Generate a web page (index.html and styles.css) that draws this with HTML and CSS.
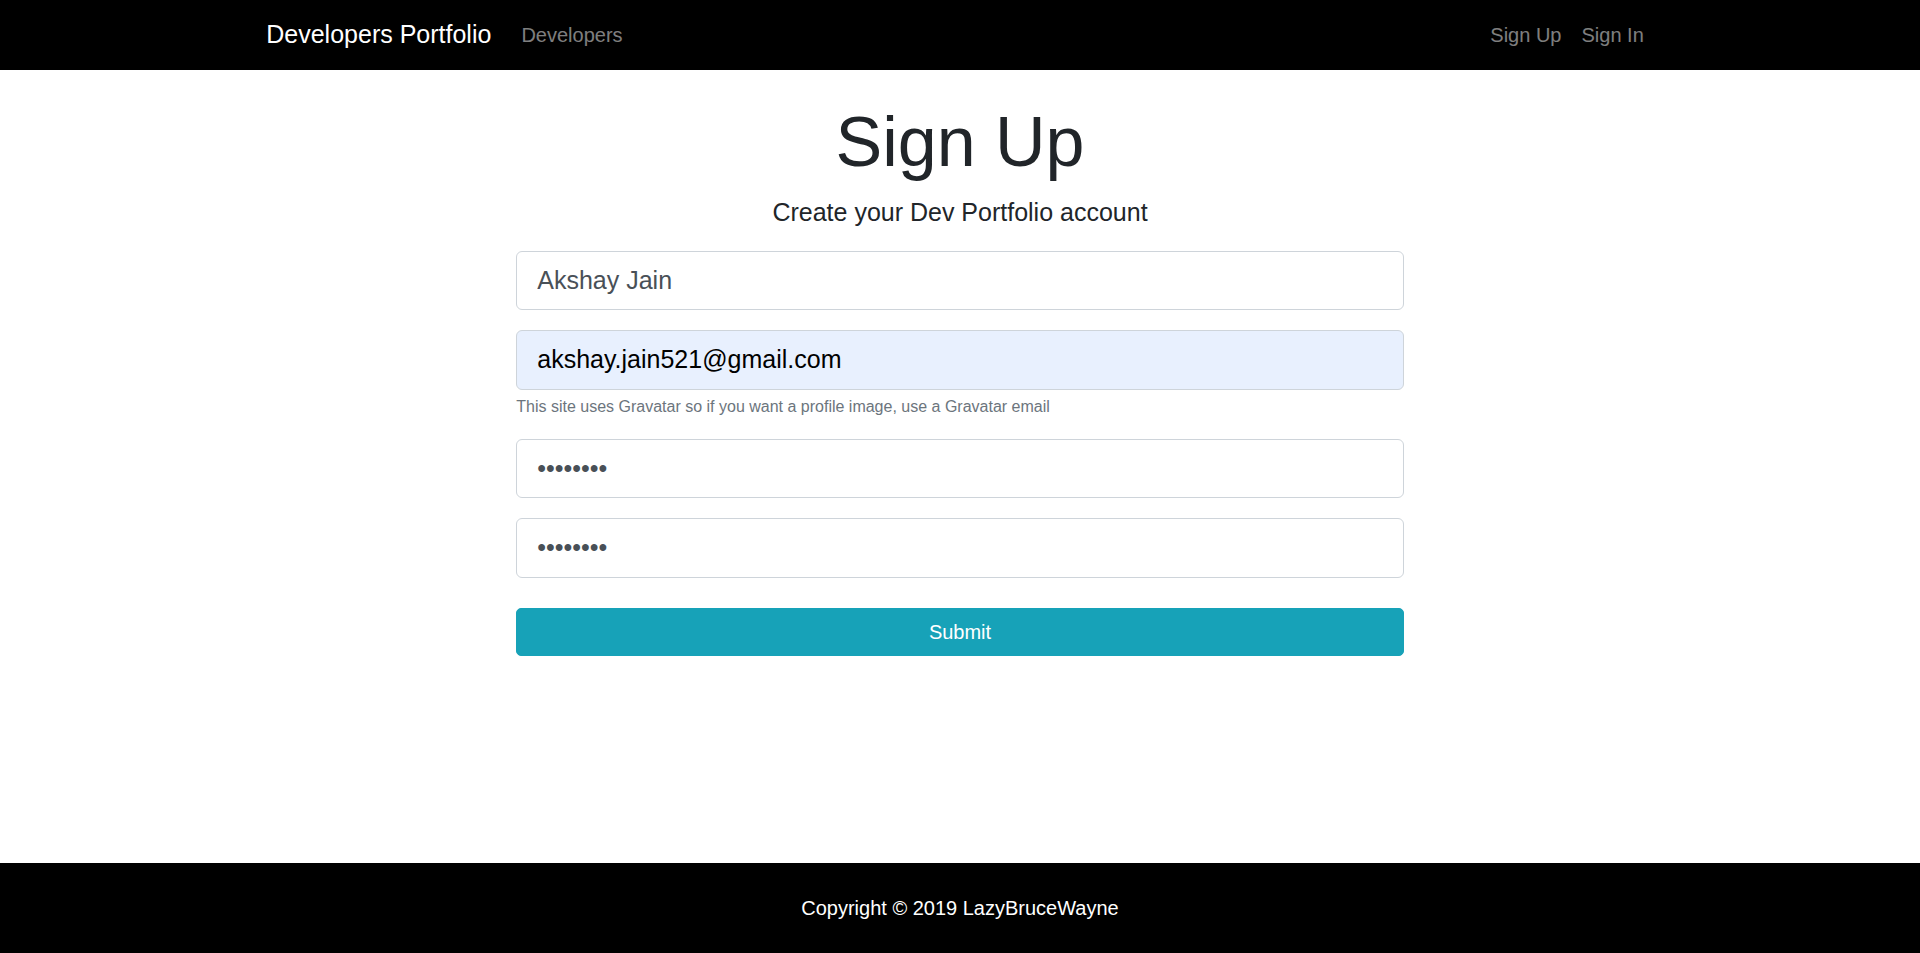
FILE: index.html
```html
<!DOCTYPE html>
<html lang="en">
<head>
<meta charset="utf-8">
<title>Developers Portfolio</title>
<link rel="stylesheet" href="styles.css">
</head>
<body>
<nav class="navbar">
  <div class="container nav-inner">
    <a class="brand" href="#">Developers Portfolio</a>
    <a class="nav-link" href="#">Developers</a>
    <div class="nav-right">
      <a class="nav-link" href="#">Sign Up</a>
      <a class="nav-link" href="#">Sign In</a>
    </div>
  </div>
</nav>
<main class="container main">
  <div class="form-col">
    <h1 class="display">Sign Up</h1>
    <p class="lead">Create your Dev Portfolio account</p>
    <form class="signup-form">
      <div class="form-group">
        <input class="form-control" type="text" value="Akshay Jain">
      </div>
      <div class="form-group">
        <input class="form-control autofilled" type="email" value="akshay.jain521@gmail.com">
        <small class="form-text">This site uses Gravatar so if you want a profile image, use a Gravatar email</small>
      </div>
      <div class="form-group">
        <input class="form-control" type="password" value="12345678">
      </div>
      <div class="form-group">
        <input class="form-control" type="password" value="12345678">
      </div>
      <button class="btn-submit" type="button">Submit</button>
    </form>
  </div>
</main>
<footer class="footer">Copyright © 2019 LazyBruceWayne</footer>
</body>
</html>
```
FILE: styles.css
```css
* { box-sizing: border-box; }
html, body { margin: 0; padding: 0; }
body {
  font-family: "Liberation Sans", Arial, sans-serif;
  color: #212529;
  background: #fff;
  min-height: 100vh;
  display: flex;
  flex-direction: column;
}
a { text-decoration: none; }
.container {
  width: 1387.5px;
  margin-left: auto;
  margin-right: auto;
}
.navbar {
  background: #000;
  padding: 10px 20px;
  margin-bottom: 30px;
}
.nav-inner {
  display: flex;
  align-items: center;
  height: 50px;
}
.brand {
  color: #fff;
  font-size: 25px;
  line-height: 37.5px;
  padding: 6.25px 0;
  margin-right: 20px;
}
.nav-link {
  color: rgba(255,255,255,0.5);
  font-size: 20px;
  line-height: 30px;
  padding: 10px;
}
.nav-right {
  margin-left: auto;
  display: flex;
}
.form-col {
  width: 887.5px;
  margin: 0 auto;
}
.display {
  font-size: 70px;
  font-weight: 300;
  line-height: 1.2;
  margin: 0 0 10px;
  text-align: center;
  color: #212529;
}
.lead {
  font-size: 25px;
  font-weight: 300;
  line-height: 1.5;
  margin: 0 0 19px;
  text-align: center;
}
.signup-form { margin: 0; }
.form-group { margin-bottom: 20px; }
.form-control {
  display: block;
  width: 100%;
  height: 59.5px;
  padding: 10px 20px;
  font-family: "Liberation Sans", Arial, sans-serif;
  font-size: 25px;
  line-height: 1.5;
  color: #495057;
  background: #fff;
  border: 1px solid #ced4da;
  border-radius: 6px;
  outline: none;
}
.autofilled {
  background: #e8f0fe;
  color: #000;
}
.form-text {
  display: block;
  margin-top: 5px;
  font-size: 16px;
  line-height: 24px;
  color: #6c757d;
}
.btn-submit {
  display: block;
  width: 100%;
  margin-top: 30px;
  height: 48px;
  padding: 7.5px 15px;
  font-family: "Liberation Sans", Arial, sans-serif;
  font-size: 20px;
  line-height: 30px;
  color: #fff;
  background: #17a2b8;
  border: 1px solid #17a2b8;
  border-radius: 5px;
}
.footer {
  margin-top: auto;
  background: #000;
  color: #fff;
  text-align: center;
  font-size: 20px;
  line-height: 30px;
  padding: 30px;
}
```
